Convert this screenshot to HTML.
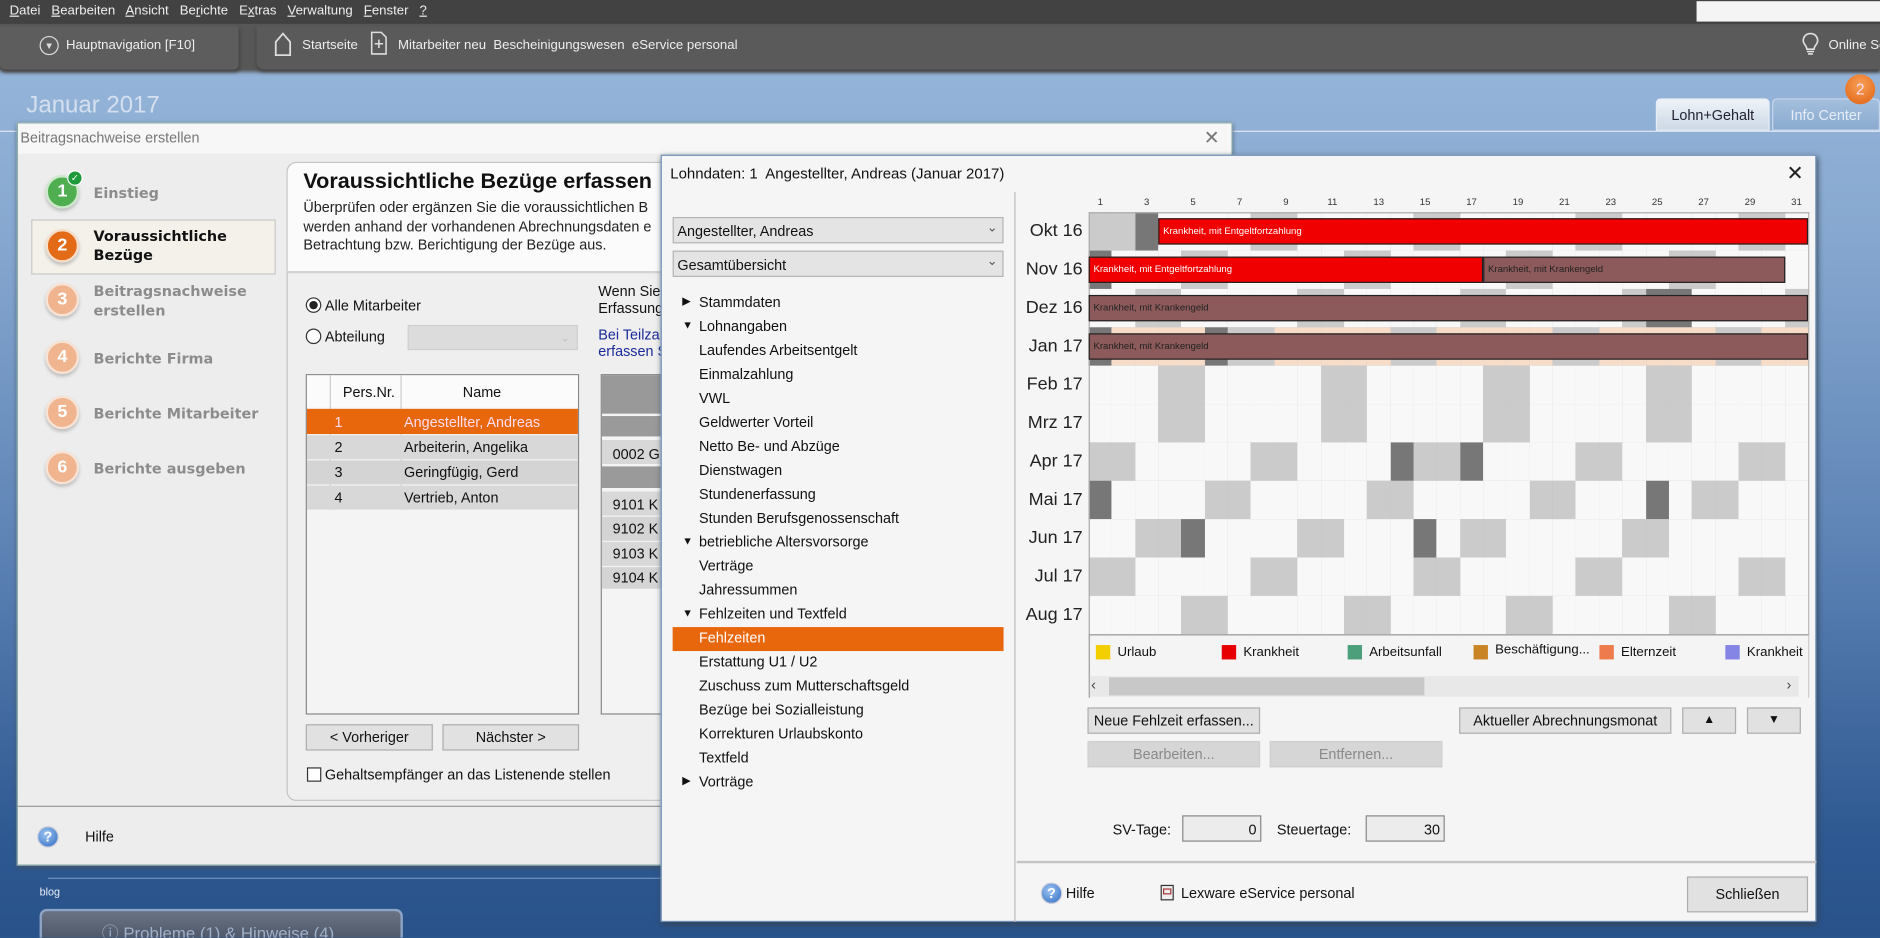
<!DOCTYPE html>
<html><head><meta charset="utf-8">
<style>
*{box-sizing:border-box;margin:0;padding:0}
html,body{width:1880px;height:938px;overflow:hidden;background:#2d5790}
#w{position:absolute;left:0;top:0;width:1568px;height:782px;transform:scale(1.19898);transform-origin:0 0;font-family:"Liberation Sans",sans-serif;font-size:12px;color:#111;overflow:hidden;
background:linear-gradient(180deg,#95b4d9 58px,#86a7cf 200px,#5e84b6 450px,#2e5891 700px,#29528a 782px)}
.a{position:absolute;white-space:nowrap}
.btn{position:absolute;background:#e1e1e1;border:1px solid #adadad;text-align:center;font-size:12px}
.dis{color:#8a8a8a;background:#d6d6d6;border-color:#cfcfcf}
.step .c{position:absolute;width:28px;height:28px;border-radius:50%;background:#f0b48e;color:#fff;font-weight:bold;font-size:15px;text-align:center;line-height:24px;box-shadow:0 2px 3px #bbb;border:2px solid #f7e3d6}
.step .t{position:absolute;font-weight:bold;color:#8c8c8c;line-height:16px;font-family:"DejaVu Sans",sans-serif;font-size:12px}
.tree div{position:absolute;font-size:12px;white-space:nowrap}
.cell{position:absolute;border-right:1px solid #b8b8b8;border-bottom:1px solid #b8b8b8}
.bar{position:absolute;height:22px;border:1px solid #222;font-size:8px;color:#fff;line-height:20px;padding-left:3px;white-space:nowrap;overflow:hidden}
.ml{position:absolute;width:60px;text-align:right;font-size:15px;color:#222}
.lg{position:absolute;width:12px;height:12px}
</style></head><body><div id="w">
<div class="a" style="left:0;top:0;width:1568px;height:20px;background:#424242"></div>
<div class="a" style="left:1415px;top:1px;width:153px;height:17px;background:#f4f4f4"></div>
<div class="a" style="left:8px;top:3px;color:#eee;font-size:11px">
<span style="text-decoration:underline">D</span>atei&nbsp;&nbsp; <span style="text-decoration:underline">B</span>earbeiten&nbsp;&nbsp; <span style="text-decoration:underline">A</span>nsicht&nbsp;&nbsp; Be<span style="text-decoration:underline">r</span>ichte&nbsp;&nbsp; E<span style="text-decoration:underline">x</span>tras&nbsp;&nbsp; <span style="text-decoration:underline">V</span>erwaltung&nbsp;&nbsp; <span style="text-decoration:underline">F</span>enster&nbsp;&nbsp; <span style="text-decoration:underline">?</span></div>
<div class="a" style="left:0;top:20px;width:1568px;height:38px;background:#575757;box-shadow:0 2px 3px #555"></div>
<div class="a" style="left:0;top:22px;width:199px;height:36px;background:#5d5d5d;border-radius:0 0 4px 4px;box-shadow:1px 2px 3px #444"></div>
<div class="a" style="left:214px;top:22px;width:1354px;height:36px;background:#5a5a5a;border-radius:0 0 0 6px;box-shadow:0 2px 3px #444"></div>
<div class="a" style="left:33px;top:30px;width:16px;height:16px;border:1.5px solid #ddd;border-radius:50%"></div>
<div class="a" style="left:37px;top:34px;color:#ddd;font-size:8px">▼</div>
<div class="a" style="left:55px;top:32px;color:#eee;font-size:11px">Hauptnavigation [F10]</div>
<svg class="a" style="left:228px;top:26px" width="16" height="22"><path d="M2 20V9L8 2L14 9V20Z" fill="none" stroke="#ddd" stroke-width="1.5"/></svg>
<div class="a" style="left:252px;top:32px;color:#eee;font-size:11px">Startseite</div>
<svg class="a" style="left:309px;top:26px" width="14" height="20"><path d="M1 1H9L13 5V19H1Z" fill="none" stroke="#ddd" stroke-width="1.3"/><path d="M7 7V14M3.5 10.5H10.5" stroke="#ddd" stroke-width="1.3"/></svg>
<div class="a" style="left:332px;top:32px;color:#eee;font-size:11px">Mitarbeiter neu&nbsp; Bescheinigungswesen&nbsp; eService personal</div>
<svg class="a" style="left:1503px;top:27px" width="14" height="20"><path d="M7 1C3 1 1 4 1 7C1 10 4 11 4 14H10C10 11 13 10 13 7C13 4 11 1 7 1ZM4 16H10M5 18H9" fill="none" stroke="#ddd" stroke-width="1.4"/></svg>
<div class="a" style="left:1525px;top:32px;color:#eee;font-size:11px">Online Se</div>
<div class="a" style="left:22px;top:77px;color:#d4e0ee;font-size:20px">Januar 2017</div>
<div class="a" style="left:1381px;top:82px;width:95px;height:27px;background:linear-gradient(#eef3f8,#cdd9e6);border:1px solid #e6eef6;border-radius:4px 4px 0 0;color:#223;font-size:12px;text-align:center;line-height:26px">Lohn+Gehalt</div>
<div class="a" style="left:1478px;top:82px;width:90px;height:27px;background:linear-gradient(#a4bfdd,#8aaad0);border:1px solid #c7d8ec;border-radius:4px 4px 0 0;color:#e5eef8;font-size:12px;text-align:center;line-height:26px">Info Center</div>
<div class="a" style="left:1539px;top:62px;width:25px;height:25px;border-radius:50%;background:radial-gradient(circle at 50% 35%,#f8a058,#e0600f);color:#fde;font-size:13px;text-align:center;line-height:25px">2</div>
<div class="a" style="left:0;top:109px;width:1568px;height:1px;background:#dfe9f4"></div>
<div class="a" style="left:14px;top:102px;width:1014px;height:620px;background:#ededed;border:1px solid #8aa;box-shadow:0 2px 4px #456"></div>
<div class="a" style="left:15px;top:103px;width:1012px;height:25px;background:#f7f7f7"></div>
<div class="a" style="left:17px;top:108px;color:#777;font-size:12px">Beitragsnachweise erstellen</div>
<div class="a" style="left:1004px;top:105px;color:#777;font-size:16px">✕</div>
<div class="step">
<div class="c" style="left:38px;top:146px;background:#4fae4f;border-color:#cde8cd">1</div>
<div class="a" style="left:56px;top:142px;width:13px;height:13px;border-radius:50%;background:#1f9a3a;border:1px solid #fff;color:#fff;font-size:8px;text-align:center;line-height:11px">✓</div>
<div class="t" style="left:78px;top:153px">Einstieg</div>
<div class="a" style="left:26px;top:183px;width:204px;height:46px;background:#f4f1ea;border:1px solid #c8c8c8"></div>
<div class="c" style="left:38px;top:191px;background:#e36a16;border-color:#f6ddc8">2</div>
<div class="t" style="left:78px;top:189px;color:#111">Voraussichtliche<br>Bezüge</div>
<div class="c" style="left:38px;top:236px">3</div>
<div class="t" style="left:78px;top:235px">Beitragsnachweise<br>erstellen</div>
<div class="c" style="left:38px;top:284px">4</div>
<div class="t" style="left:78px;top:291px">Berichte Firma</div>
<div class="c" style="left:38px;top:330px">5</div>
<div class="t" style="left:78px;top:337px">Berichte Mitarbeiter</div>
<div class="c" style="left:38px;top:376px">6</div>
<div class="t" style="left:78px;top:383px">Berichte ausgeben</div>
</div>
<div class="a" style="left:239px;top:135px;width:330px;height:533px;background:#efefef;border:1px solid #c4c4c4;border-radius:8px 0 0 8px"></div>
<div class="a" style="left:240px;top:136px;width:320px;height:92px;background:#fbfbfb;border-radius:8px 0 0 0;border-bottom:2px solid #d4d4d4"></div>
<div class="a" style="left:253px;top:141px;font-size:18px;font-weight:bold;color:#111">Voraussichtliche Bezüge erfassen</div>
<div class="a" style="left:253px;top:166px;font-size:12px;line-height:15.5px;color:#222">Überprüfen oder ergänzen Sie die voraussichtlichen B<br>werden anhand der vorhandenen Abrechnungsdaten e<br>Betrachtung bzw. Berichtigung der Bezüge aus.</div>
<div class="a" style="left:255px;top:248px;width:13px;height:13px;border:1px solid #333;border-radius:50%;background:#fff"></div>
<div class="a" style="left:258px;top:251px;width:7px;height:7px;border-radius:50%;background:#222"></div>
<div class="a" style="left:271px;top:248px">Alle Mitarbeiter</div>
<div class="a" style="left:255px;top:274px;width:13px;height:13px;border:1px solid #333;border-radius:50%;background:#fff"></div>
<div class="a" style="left:271px;top:274px">Abteilung</div>
<div class="a" style="left:340px;top:271px;width:142px;height:21px;background:#dcdcdc;border:1px solid #d0d0d0;color:#bbb;font-size:9px;text-align:right;padding:5px 6px 0 0">⌄</div>
<div class="a" style="left:255px;top:312px;width:228px;height:284px;background:#f4f4f4;border:1px solid #888"></div>
<div class="a" style="left:256px;top:313px;width:226px;height:27px;background:#fbfbfb"></div>
<div class="a" style="left:275px;top:313px;width:1px;height:112px;background:#ccc"></div>
<div class="a" style="left:334px;top:313px;width:1px;height:112px;background:#ccc"></div>
<div class="a" style="left:286px;top:320px">Pers.Nr.</div>
<div class="a" style="left:386px;top:320px">Name</div>
<div class="a" style="left:256px;top:341px;width:226px;height:21px;background:#e8660c"></div>
<div class="a" style="left:256px;top:363px;width:226px;height:20px;background:#d8d8d8"></div>
<div class="a" style="left:256px;top:384px;width:226px;height:20px;background:#d4d4d4"></div>
<div class="a" style="left:256px;top:405px;width:226px;height:20px;background:#d8d8d8"></div>
<div class="a" style="left:279px;top:345px;color:#fde">1</div><div class="a" style="left:337px;top:345px;color:#fde">Angestellter, Andreas</div>
<div class="a" style="left:279px;top:366px">2</div><div class="a" style="left:337px;top:366px">Arbeiterin, Angelika</div>
<div class="a" style="left:279px;top:387px">3</div><div class="a" style="left:337px;top:387px">Geringfügig, Gerd</div>
<div class="a" style="left:279px;top:408px">4</div><div class="a" style="left:337px;top:408px">Vertrieb, Anton</div>
<div class="btn" style="left:255px;top:604px;width:106px;height:22px;line-height:20px">&lt; Vorheriger</div>
<div class="btn" style="left:369px;top:604px;width:114px;height:22px;line-height:20px">Nächster &gt;</div>
<div class="a" style="left:256px;top:640px;width:12px;height:12px;border:1px solid #333;background:#fff"></div>
<div class="a" style="left:271px;top:639px">Gehaltsempfänger an das Listenende stellen</div>
<div class="a" style="left:499px;top:236px;line-height:14px">Wenn Sie<br>Erfassung</div>
<div class="a" style="left:499px;top:272px;line-height:14px;color:#1a2a9a">Bei Teilzah<br>erfassen S</div>
<div class="a" style="left:501px;top:312px;width:60px;height:284px;border:1px solid #888;background:#f4f4f4"></div>
<div class="a" style="left:502px;top:313px;width:60px;height:32px;background:#999"></div>
<div class="a" style="left:502px;top:347px;width:60px;height:17px;background:#9a9a9a"></div>
<div class="a" style="left:502px;top:367px;width:60px;height:20px;background:#d8d8d8"></div>
<div class="a" style="left:502px;top:389px;width:60px;height:18px;background:#9a9a9a"></div>
<div class="a" style="left:502px;top:410px;width:60px;height:20px;background:#d8d8d8"></div>
<div class="a" style="left:502px;top:431px;width:60px;height:20px;background:#d4d4d4"></div>
<div class="a" style="left:502px;top:452px;width:60px;height:20px;background:#d8d8d8"></div>
<div class="a" style="left:502px;top:473px;width:60px;height:18px;background:#d4d4d4"></div>
<div class="a" style="left:511px;top:372px">0002 G</div>
<div class="a" style="left:511px;top:414px">9101 K</div>
<div class="a" style="left:511px;top:434px">9102 K</div>
<div class="a" style="left:511px;top:455px">9103 K</div>
<div class="a" style="left:511px;top:475px">9104 K</div>
<div class="a" style="left:15px;top:672px;width:536px;height:1px;background:#999"></div>
<div class="a" style="left:31px;top:689px;width:18px;height:18px;border-radius:50%;background:radial-gradient(circle at 40% 35%,#9cc4f2,#2f6cc0);border:1px solid #ccd;color:#fff;font-size:12px;font-weight:bold;text-align:center;line-height:16px">?</div>
<div class="a" style="left:71px;top:691px">Hilfe</div>
<div class="a" style="left:40px;top:732px;width:520px;height:1px;background:#6f91bd"></div>
<div class="a" style="left:33px;top:739px;color:#e8eef6;font-size:9px">blog</div>
<div class="a" style="left:33px;top:758px;width:303px;height:30px;background:linear-gradient(#6a7384,#4c5566);border:2px solid #8ea4c4;border-radius:6px;color:#9fb0c8;font-size:14px;padding:8px 0 0 50px">ⓘ Probleme (1) &amp; Hinweise (4)</div>
<div class="a" style="left:551px;top:129px;width:964px;height:640px;background:#f5f5f5;border:1px solid #6c8db8;box-shadow:1px 2px 5px #345"></div>
<div class="a" style="left:559px;top:138px;font-size:12.5px">Lohndaten: 1&nbsp; Angestellter, Andreas (Januar 2017)</div>
<div class="a" style="left:1490px;top:135px;font-size:17px;color:#222">✕</div>
<div class="a" style="left:846px;top:160px;width:1px;height:609px;background:#bbb"></div>
<div class="a" style="left:561px;top:181px;width:276px;height:22px;background:#e4e4e4;border:1px solid #b4b4b4;padding:4px 3px">Angestellter, Andreas</div>
<div class="a" style="left:823px;top:183px;color:#555;font-size:11px">⌄</div>
<div class="a" style="left:561px;top:209px;width:276px;height:22px;background:#e4e4e4;border:1px solid #b4b4b4;padding:4px 3px">Gesamtübersicht</div>
<div class="a" style="left:823px;top:211px;color:#555;font-size:11px">⌄</div>
<div class="a" style="left:561px;top:523px;width:276px;height:20px;background:#e8660c"></div>
<div class="tree">
<div style="left:569px;top:246px;font-size:9px">▶</div><div style="left:583px;top:245px">Stammdaten</div>
<div style="left:569px;top:266px;font-size:9px">▼</div><div style="left:583px;top:265px">Lohnangaben</div>
<div style="left:583px;top:285px">Laufendes Arbeitsentgelt</div>
<div style="left:583px;top:305px">Einmalzahlung</div>
<div style="left:583px;top:325px">VWL</div>
<div style="left:583px;top:345px">Geldwerter Vorteil</div>
<div style="left:583px;top:365px">Netto Be- und Abzüge</div>
<div style="left:583px;top:385px">Dienstwagen</div>
<div style="left:583px;top:405px">Stundenerfassung</div>
<div style="left:583px;top:425px">Stunden Berufsgenossenschaft</div>
<div style="left:569px;top:446px;font-size:9px">▼</div><div style="left:583px;top:445px">betriebliche Altersvorsorge</div>
<div style="left:583px;top:465px">Verträge</div>
<div style="left:583px;top:485px">Jahressummen</div>
<div style="left:569px;top:506px;font-size:9px">▼</div><div style="left:583px;top:505px">Fehlzeiten und Textfeld</div>
<div style="left:583px;top:525px;color:#fff">Fehlzeiten</div>
<div style="left:583px;top:545px">Erstattung U1 / U2</div>
<div style="left:583px;top:565px">Zuschuss zum Mutterschaftsgeld</div>
<div style="left:583px;top:585px">Bezüge bei Sozialleistung</div>
<div style="left:583px;top:605px">Korrekturen Urlaubskonto</div>
<div style="left:583px;top:625px">Textfeld</div>
<div style="left:569px;top:646px;font-size:9px">▶</div><div style="left:583px;top:645px">Vorträge</div>
</div>
<div id="cal"></div>
<div class="a" style="left:908px;top:529px;width:601px;height:53px;border-left:1px solid #999;border-right:1px solid #ccc;border-top:1px solid #999;background:#f4f4f4"></div>
<div class="lg" style="left:914px;top:538px;background:#f4cf00"></div><div class="a" style="left:932px;top:538px;font-size:11px">Urlaub</div>
<div class="lg" style="left:1019px;top:538px;background:#e60000"></div><div class="a" style="left:1037px;top:538px;font-size:11px">Krankheit</div>
<div class="lg" style="left:1124px;top:538px;background:#4d9e7a"></div><div class="a" style="left:1142px;top:538px;font-size:11px">Arbeitsunfall</div>
<div class="lg" style="left:1229px;top:538px;background:#c98425"></div><div class="a" style="left:1247px;top:536px;font-size:11px">Beschäftigung...</div>
<div class="lg" style="left:1334px;top:538px;background:#ee7b4c"></div><div class="a" style="left:1352px;top:538px;font-size:11px">Elternzeit</div>
<div class="lg" style="left:1439px;top:538px;background:#8585e6"></div><div class="a" style="left:1457px;top:538px;font-size:11px;width:50px;overflow:hidden">Krankheit l</div>
<div class="a" style="left:909px;top:564px;width:591px;height:17px;background:#e8e8e8"></div>
<div class="a" style="left:925px;top:565px;width:263px;height:15px;background:#c8c8c8"></div>
<div class="a" style="left:910px;top:564px;font-size:12px;color:#444">‹</div>
<div class="a" style="left:1490px;top:564px;font-size:12px;color:#444">›</div>
<div class="btn" style="left:907px;top:590px;width:144px;height:22px;line-height:20px">Neue Fehlzeit erfassen...</div>
<div class="btn" style="left:1217px;top:590px;width:177px;height:22px;line-height:20px">Aktueller Abrechnungsmonat</div>
<div class="btn" style="left:1403px;top:590px;width:45px;height:22px;line-height:20px;font-size:10px">▲</div>
<div class="btn" style="left:1457px;top:590px;width:45px;height:22px;line-height:20px;font-size:10px">▼</div>
<div class="btn dis" style="left:907px;top:618px;width:144px;height:22px;line-height:20px">Bearbeiten...</div>
<div class="btn dis" style="left:1059px;top:618px;width:144px;height:22px;line-height:20px">Entfernen...</div>
<div class="a" style="left:928px;top:685px">SV-Tage:</div>
<div class="a" style="left:986px;top:680px;width:66px;height:22px;border:1px solid #888;background:#ececec;text-align:right;padding:4px 3px">0</div>
<div class="a" style="left:1065px;top:685px">Steuertage:</div>
<div class="a" style="left:1139px;top:680px;width:66px;height:22px;border:1px solid #888;background:#ececec;text-align:right;padding:4px 3px">30</div>
<div class="a" style="left:848px;top:718px;width:667px;height:2px;background:#c4c4c4"></div>
<div class="a" style="left:868px;top:736px;width:18px;height:18px;border-radius:50%;background:radial-gradient(circle at 40% 35%,#9cc4f2,#2f6cc0);border:1px solid #ccd;color:#fff;font-size:12px;font-weight:bold;text-align:center;line-height:16px">?</div>
<div class="a" style="left:889px;top:738px">Hilfe</div>
<div class="a" style="left:968px;top:738px;width:11px;height:13px;border:1px solid #333;background:#eee"></div>
<div class="a" style="left:970px;top:741px;width:7px;height:5px;border:1px solid #a33"></div>
<div class="a" style="left:985px;top:738px">Lexware eService personal</div>
<div class="btn" style="left:1407px;top:731px;width:101px;height:30px;line-height:28px">Schließen</div>
</div>
<script>
(function(){
var c=document.getElementById('cal'),h='';
var X0=908,W=600/31,Y0=177,RH=32;
for(var d=1;d<=31;d+=2)h+='<div class="a" style="left:'+(X0+(d-1)*W)+'px;top:164px;width:'+W+'px;text-align:center;font-size:8px;color:#333">'+d+'</div>';
var M=[["Okt 16",5,31,[3]],["Nov 16",1,30,[1]],["Dez 16",3,31,[25,26]],["Jan 17",6,31,[1,6]],["Feb 17",2,28,[]],["Mrz 17",2,31,[]],["Apr 17",5,30,[14,17]],["Mai 17",0,31,[1,25]],["Jun 17",3,30,[5,15]],["Jul 17",5,31,[]],["Aug 17",1,31,[]]];
for(var r=0;r<M.length;r++){var m=M[r],y=Y0+r*RH;
h+='<div class="ml" style="left:843px;top:'+(y+7)+'px">'+m[0]+'</div>';
for(var d=1;d<=31;d++){var dow=(m[1]+d-1)%7,col='#f8f8f8';
if(d<=m[2]){if(r==3)col='#f7dcc8';if(dow>=5)col='#cbcbcb';if(m[3].indexOf(d)>=0)col='#777';}
h+='<div class="cell" style="left:'+(X0+(d-1)*W)+'px;top:'+y+'px;width:'+(W+1)+'px;height:'+(RH+1)+'px;background:'+col+'"></div>';}
}
h+='<div class="a" style="left:908px;top:177px;width:601px;height:353px;border-left:1px solid #aaa;border-top:1px solid #aaa"></div>';
function bar(r,d1,d2,col,t){var x=X0+(d1-1)*W,w=(d2-d1+1)*W;h+='<div class="bar" style="left:'+x+'px;top:'+(Y0+r*RH+5)+'px;width:'+w+'px;background:'+col+';color:'+(col=='#f00000'?'#fff':'#222')+'">'+t+'</div>';}
bar(0,4,31,'#f00000','Krankheit, mit Entgeltfortzahlung');
bar(1,1,17,'#f00000','Krankheit, mit Entgeltfortzahlung');
bar(1,18,30,'#8c5a5a','Krankheit, mit Krankengeld');
bar(2,1,31,'#8c5a5a','Krankheit, mit Krankengeld');
bar(3,1,31,'#8c5a5a','Krankheit, mit Krankengeld');
c.innerHTML=h;})();
</script>
</body></html>
